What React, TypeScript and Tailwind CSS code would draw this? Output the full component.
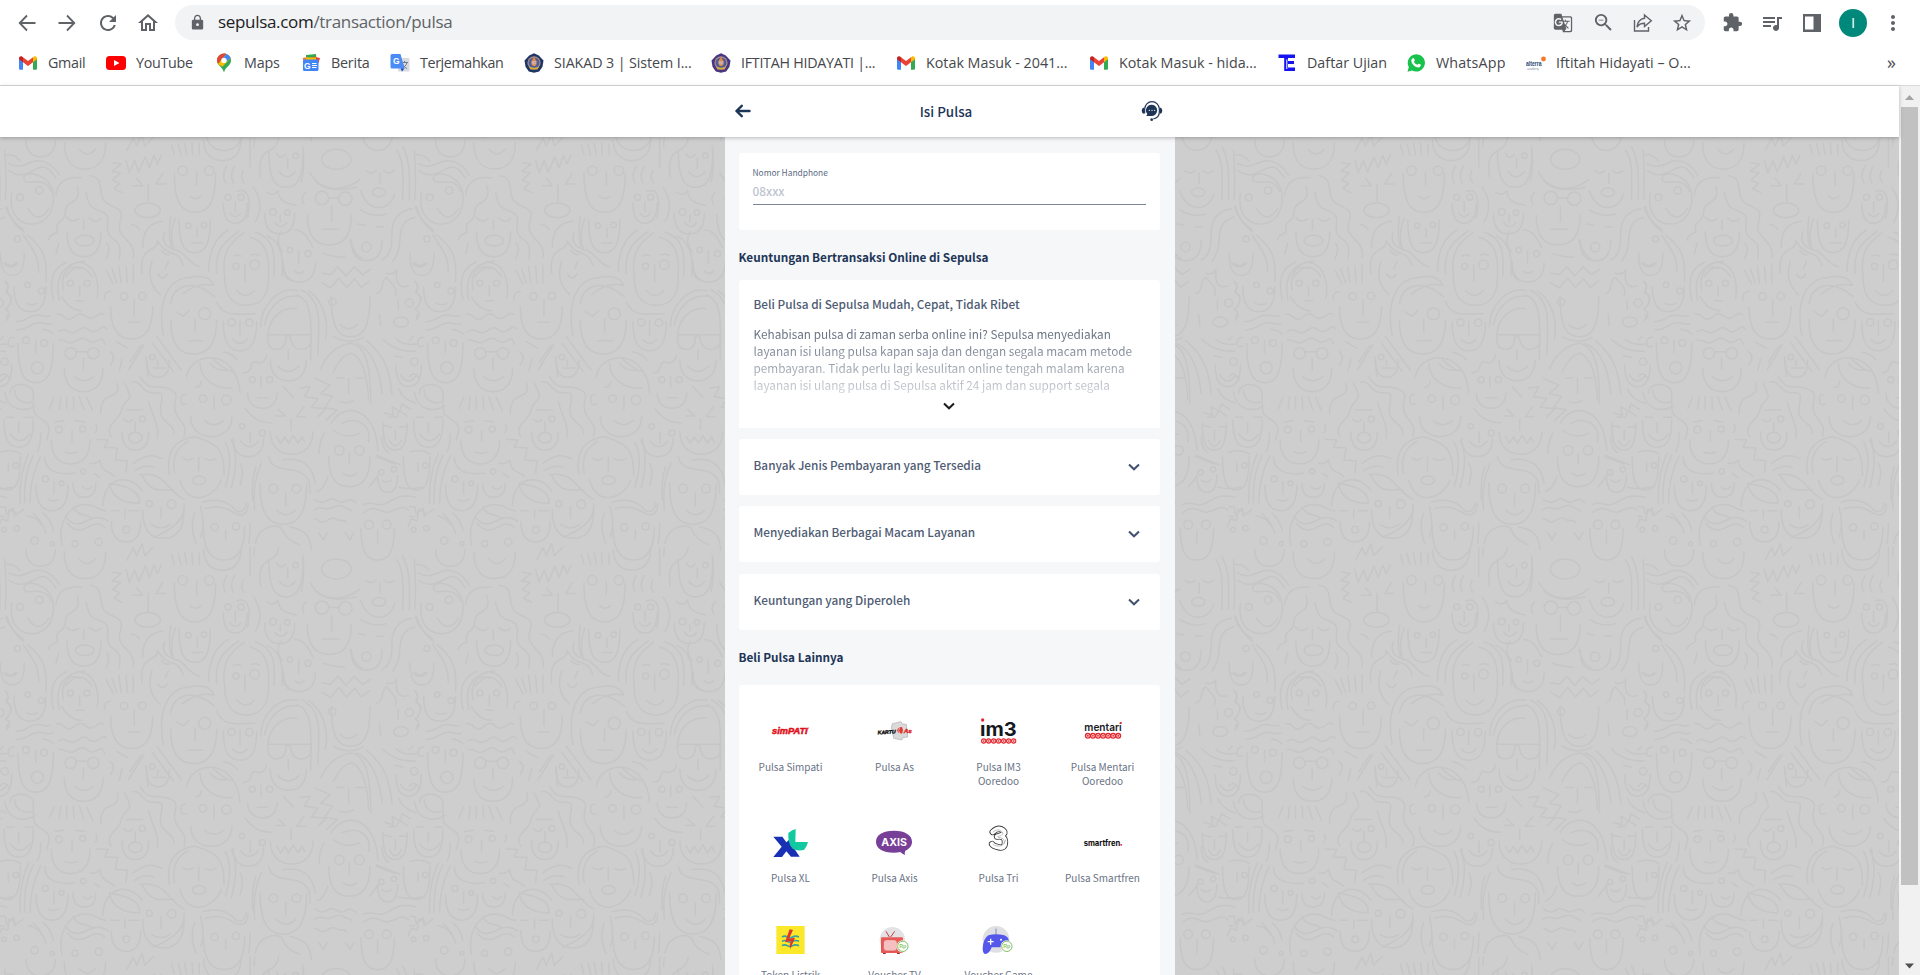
import React from "react";
import { MdExtension, MdGTranslate, MdLock, MdMoreVert, MdQueueMusic, MdZoomOut, MdStarBorder, MdRefresh, MdOutlineHome } from "react-icons/md";

/* ---------- doodle backdrop ---------- */

const TILE = 1228.8;

// Each face: chin outline, given as centre, half width, top and bottom.
const jaws: [number, number, number, number][] = [
  [122, 44, 30, 80], [255, 62, 38, 117], [667, 56, 30, 92], [858, 52, 60, 172], [585, 62, 130, 247],
  [706, 36, 220, 280], [839, 45, 250, 312], [584, 47, 270, 368], [252, 51, 305, 380], [988, 66, 255, 345],
  [740, 66, 440, 526], [395, 63, 530, 627], [581, 69, 570, 672], [720, 50, 575, 662], [865, 54, 690, 752],
  [90, 48, 470, 545], [107, 53, 640, 758], [251, 58, 715, 785], [634, 62, 860, 920], [56, 44, 870, 952],
  [212, 58, 930, 1002], [406, 40, 905, 960], [745, 46, 925, 980], [156, 48, 1065, 1142], [850, 70, 1060, 1183],
  [875, 64, 905, 973], [378, 44, 1175, 1235], [253, 34, 1060, 1102], [898, 48, 400, 456], [37, 36, 370, 436],
  [1100, 46, 330, 392], [1185, 36, 880, 960], [1048, 62, 980, 1070], [1163, 30, 1035, 1087], [787, 44, 790, 835],
  [474, 34, 690, 742], [490, 62, 1140, 1225], [672, 62, 1190, 1290], [1133, 50, 1195, 1290], [1226, 38, 705, 770],
  [1052, 58, 500, 620], [1250, 40, 980, 1080],
];

const eyes: [number, number, number][] = [
  [887, 77, 8], [548, 122, 14], [628, 122, 14], [684, 202, 9], [723, 202, 9], [819, 246, 10], [862, 248, 8],
  [60, 202, 10], [118, 181, 11], [565, 287, 8], [612, 285, 8], [966, 204, 20], [1036, 206, 20], [52, 327, 9],
  [708, 409, 9], [764, 404, 14], [870, 360, 8], [924, 371, 9], [83, 465, 8], [124, 483, 9], [211, 460, 9],
  [261, 460, 9], [372, 499, 11], [427, 498, 11], [614, 551, 18], [695, 577, 11], [748, 578, 11], [997, 516, 11],
  [78, 631, 10], [132, 639, 10], [212, 670, 17], [280, 670, 17], [457, 681, 8], [609, 806, 11], [679, 810, 14],
  [757, 749, 9], [809, 749, 9], [177, 899, 10], [248, 897, 9], [427, 867, 9], [726, 889, 8], [787, 909, 9],
  [1018, 961, 14], [1078, 961, 14], [250, 1024, 8], [136, 1047, 9], [185, 1060, 7], [448, 1121, 9], [515, 1123, 13],
  [820, 1076, 13], [889, 1076, 13], [379, 1199, 10], [644, 1192, 11], [708, 1189, 11], [12, 1199, 7], [50, 1195, 8],
  [104, 1232, 11], [157, 1241, 6], [225, 1241, 9], [296, 1236, 11], [112, 713, 18], [1099, 351, 14],
  [1228, 519, 12], [14, 695, 11], [1107, 1184, 13], [1160, 1184, 13], [47, 1006, 8], [1144, 1027, 8], [1182, 1018, 8],
];

// Noses: short vertical strokes.
const noses: [number, number, number][] = [
  [863, 85, 115], [590, 126, 165], [445, 162, 215], [706, 215, 245], [841, 255, 275], [592, 295, 322], [251, 270, 300],
  [995, 228, 276], [735, 404, 455], [896, 362, 400], [239, 468, 498], [403, 510, 558], [585, 567, 605], [720, 572, 615],
  [865, 660, 690], [107, 632, 668], [250, 685, 720], [473, 690, 708], [643, 798, 838], [783, 738, 770], [1046, 745, 790],
  [56, 878, 908], [216, 902, 935], [406, 876, 905], [751, 905, 938], [873, 868, 900], [1048, 970, 1003], [596, 982, 1022],
  [162, 1055, 1092], [857, 1090, 1128], [375, 1140, 1165], [483, 1130, 1165], [677, 1200, 1228], [1195, 510, 540],
  [1140, 130, 160], [1133, 1200, 1240], [1186, 900, 930], [25, 1000, 1025],
];

// Mouths: centre, half width, baseline, depth.
const mouths: [number, number, number, number][] = [
  [262, 24, 58, 14], [862, 24, 125, 15], [586, 16, 198, 8], [706, 16, 250, 10], [843, 18, 278, 12], [592, 16, 339, 0],
  [32, 16, 398, 9], [992, 26, 298, 0], [737, 26, 482, 14], [898, 14, 424, 6], [96, 16, 520, 4], [402, 18, 577, 0],
  [586, 22, 632, 0], [720, 22, 628, 12], [865, 32, 708, 16], [252, 30, 740, 12], [478, 18, 714, 0], [642, 28, 872, 12],
  [788, 16, 803, 0], [60, 30, 912, 20], [214, 18, 966, 4], [748, 26, 934, 16], [1050, 20, 1030, 8], [161, 16, 1108, 5],
  [858, 28, 1140, 14], [262, 14, 1070, 8], [482, 28, 1184, 10], [1046, 26, 584, 12], [115, 32, 235, 26], [240, 12, 512, 0],
  [1186, 18, 930, 18], [1226, 24, 735, 18], [1160, 14, 1050, 6], [1260, 22, 400, 10], [488, 14, 432, 12], [1230, 34, 1072, 4],
];

const ovals: [number, number, number, number][] = [
  [1009, 88, 44, 30], [443, 241, 38, 22], [254, 332, 28, 16], [1203, 576, 22, 15], [406, 923, 20, 16], [597, 1051, 20, 13],
  [1137, 187, 20, 13],
];

const strands = [
  "M20 75q22-4 40 18M25 100c30 16 46 6 70-4s58-2 84 40M27 122c30 22 56 10 84-6s42 8 56 28M14 60q6 80 2 148",
  "M35 190c-10 70 30 90 56 92s60-12 68-60-16-78-50-88-44 10-34 20 58-18 78 30M20 230q14 48 52 76",
  "M168 195c4-40 30-56 76-52M270 137c50 6 18 62 50 82s54 14 40 60 50 50 40 104M258 188c12 62 32 44 56 62s-8 52 22 74 24 30 22 62",
  "M232 168c16 60-38 40-36 78-2 40-32 16-24 60-22 12-22 10-26 24M320 340q14 16-2 46M176 340l-8 32M200 262q16 20 36 4M268 264q18 18 34 2",
  "M378 90l10 38 16-36 12 34 20-46 12 34 14-38 10 26 12-26M380 62l20-38 10 24 16-36 8 36 26-26M338 98l26 4-28 22 26 4-24 22 22 10-18 16 24 12",
  "M410 145l18 22h-30M488 130l-20 32h28M515 45l8 28M535 42l8 34M554 40l6 34M576 40l2 34M598 42v32",
  "M750 24v86M764 24l-2 26M782 140c-10-64 14-72 32-82s20-24 22-34M908 48q8 60-4 108M830 70q10 22 26 4",
  "M680 108q-16 26-4 50M704 108q-16 26-4 50M730 122q-12 20 2 36M712 184c34-14 42 26 30 80M760 172q36 50 6 104",
  "M930 128c30 58 100 60 150 20M946 154c40 40 104 20 124 18M800 186q20 16 34-4c2 38 40 40 54 44M918 186q-18 16-6 36",
  "M526 265q-20 50-4 96M512 258q-8 60 2 90M394 284q14 0 24 14M428 352c0-60 30-74 60-78M494 306c-16 40 20 50 40 56s36 44 66 48",
  "M426 430c-10-90 50-60 46-98 36 60 56 16 78 74M456 394q-20 60 24 100M505 394l-10 22M484 362q10 14 24 12",
  "M626 424c0-80 34-110 58-124M650 430c-8-80 36-102 66-126M674 440c-10-70 14-102 58-132M750 322c40 10 60 40 56 118M766 306c56 20 60 60 56 132M802 318c48 20 48 80 44 120",
  "M700 378q12-6 22 0M754 374q14-4 24 2M884 300c30 0 44 30 54 52M842 305q-18 30 6 60M850 396q-4 50 26 56M970 370q30 12 64 12",
  "M160 510c-20-90 22-104 40-114M178 510c-18-80 24-112 76-116M190 480c-10-50 16-80 50-64M230 396c50 0 70 50 62 108M196 440q44-56 80 0M185 500q24 42 60 42",
  "M318 420l22 42M336 416l14 42M357 408l6 50M378 408l4 50M400 406v54M332 484q-22 2-18 26M82 315c50 40 60 70 56 140M70 315c40 60 46 70 46 112",
  "M490 615c-20-110 20-170 76-172M512 520c8-50 60-80 132-20M548 492q46-36 92-26M558 444q70-16 84 22M528 545l22 14 18-18M650 515c20 50 70 36 114 36",
  "M782 590c0-60 50-120 110-108M794 585c10-54 50-92 100-86M804 612c6-60 54-82 86-76M892 495c50 20 40 90 40 196M904 480c70 30 50 120 50 194M926 482c50 36 60 100 50 146",
  "M804 614h128v24q-4 20-30 20t-32-40h-12q0 40-28 40-26 0-26-28zM966 430l26 4 22-24 24 28 24-28 26 24 24-16M966 458l26 16 24-30 24 28 24-26 20 26 24-18",
  "M18 455q12 14 0 30 20 12 14 30t-16 22q24 16 2 34M48 575c40-2 36-20 62-20s20 8 40 2M50 600c40-2 40-22 66-22s20 10 40 2M128 598q18 2 32 14",
  "M170 552c26-2 20 18 38 16s18-20 36-16 16 18 34 12 20-20 34-10M176 604c24-14 24 8 44 4s24-22 38-14 18 16 34 8 14-18 28-6M176 630c24-2 20 10 38 8s24-20 40-12 18 16 34 8 18-14 26 8",
  "M42 622q-20 0-16 22 2 10 16 4M230 665h32M330 665q20 14 2 40M350 635l34 20M366 688l-8 34M432 644l-46 76M424 646l-34 50M470 620l74 100M458 640l62 84M438 680l6 60",
  "M560 740c14-80 150-86 160 48M600 700c0 50 50 78 96 74M630 700q18 24 50 20M640 688q46 40 56 34M670 666q30 6 42 24M730 728c34 2 14-44 44-30 10 4 24-6 26-22",
  "M352 760c10 44-30 32-42 54s-6 26-8 38M374 760c20 40 20 40 2 58s-6 28-24 46-34 36-18 56M396 756c30-6 28 32 60 32s34-4 26 44 42 44 40 80M420 740c30 50 50 20 90 38s-2 40 20 76 30 30 22 66M446 815c16 60 30 60 26 110",
  "M380 840h48M372 868q14 14 26 0M556 794q-16-2-12 22 2 12 16 6M586 772q16 0 18-18M900 774l30-4-16 30 40 6-20 26 44 4-24 24M944 745l46 20-28 26 36 8-24 34 38 6-34 32M834 838l22 20h-28M912 830l-22 30h26M850 770l30 32",
  "M962 716c20-44 50-70 90-76 40 6 60 50 60 180M1000 726c20-40 40-56 56-56 30 14 46 60 50 140M1070 640c50 20 70 90 76 150M1100 632c60 50 70 100 76 160M1010 744h22M1068 744h24M1020 815q20 8 40-4",
  "M14 786c10 60 60 60 92 42M30 790c0-40 70-30 70 0 0 60-4 60 28 80s16 40 12 60M44 780c0 40 40 40 50 36M148 836l14-34M178 838l4-38M200 836v-36M222 836l-2-36M252 840l-14-40M278 842l-18-40",
  "M20 862h22M76 862h24M166 876l26-4M226 872l28 4M290 928l34 2-10 22 38 2-6 36 36 2-4 36M134 982c0 40 40 54 90 48M122 910q0 40-10 54M288 884q6 20-4 24",
  "M508 1034c-14-90 40-110 76-114 70 20 90 40 88 116M524 1030c-10-50 10-80 40-96M550 984q14 12 30 0M614 986q16 10 34 0M676 936q26 50 0 134M694 930q26 50 0 144M540 1050c20 80 100 60 124 0M720 1000q14 20 0 66",
  "M60 1120q-4-84 26-150M74 1118q-4-84 26-142M90 1118q0-74 32-140M400 1000c40-30 60-26 86-14M404 1022q30-20 58-10M270 1000q18 4 30-10c6 44 30 30 44 50M282 1030l16 12",
  "M308 1128c4-90 80-100 118-46M328 1060c10 50 50 60 90 60 4-34-30-50-90-60zM426 1036c30 60 60 40 96 44M420 1034c80-10 80 50 132 74M334 1142h22M388 1142h28M552 1122q8 60-92 100",
  "M806 980c10 50 70 30 100 50s22 40 24 60M848 990c60-10 90 20 98 70M784 1000c-20 44-24 80-20 140M768 1010q-14 40-10 100M984 1040q-14 40-34 44M972 910q-16 30-14 60M736 836q30 44 80 42",
  "M830 920l12 20 12-20 12 20 14-24 14 24 12-20 8 16M944 1108c24 16 30 8 44 0s26 14 42 8 20-14 38 2M942 1140c20-16 30 0 46-4s28-16 42-6 20 4 26 14M944 1166c16 0 10 14 26 10s24-18 40-8 20-4 30 10M956 1208l14 22 12-22M1036 1208l14 22 12-22",
  "M186 1245c-16-80 34-130 84-120 24 6 20 12 48 18M196 1160c24 34 50 20 70 10s40-10 58 4M202 1180c30 36 56 14 74 6s30-2 38 6M220 1130c10 30 40 20 54 34M608 1116c50-14 80 4 94 20s34 10 36-16M616 1136c50-16 80 10 94 16s34 4 34-30",
  "M584 1150q-16 40 4 90M602 1130q14 60 0 90M750 1180q0 40-4 60M766 1240c10-60 80-60 80-40M870 1190c40 10 60 20 64 70M848 1200q10 30 50 44M100 1150q30 30 38 60M130 1150q24 20 30 52M84 1158q30 6 40 26",
  "M0 1130l16 0 4 24 20-20 4 24 26-20M0 1158l14 2M22 555v10M10 620l-10 10M0 740q14-20 30 8M0 966q36-10 62 6M1050 330q10 40 36 56M1000 620q46 26 90 2",
  "M1098 122q14 14 30 0M1152 122q14 14 30 0M1082 182c20 66 86 66 102 10M1082 240q40 24 78 12M1190 60c20 30 20 60 18 150M1208 50c22 40 22 90 20 160M1074 282l20 4M1128 290h22",
  "M1236 236c-44 6-60 40-60 70s0 70-30 84M1244 262c-40 10-42 40-44 62s0 40-22 70M1246 230q10 40 52 68M1160 430q20 6 30-10-6 60 34 48M1130 490c24-4 10-40 30-48 14 20 36 30 26 54M1244 454q16 14 4 34 20 10 12 26M1138 552l4 36",
  "M1148 628c30 30 60 36 98 36M1190 628q20 20 60 14M1184 678l24 4M1196 776q10 30 52 44M1154 848l26 8-4-26 24 14 6-22 26 16M1166 862l24-2 8-18 24 16M1150 886l24 6M1198 890h24M1146 922q0 34 20 46M1130 976l70 28M1132 1040l-24 30",
  "M994 880c30-60 130-60 140 80M1026 880c40-20 90 0 80 56M1000 900q40 30 78 10M1128 980l58 22M1090 1124c30-14 40 10 68-4s40-30 90-18M1090 1148c40-30 50 4 76-2s40-24 60-6M1224 1190l10-24 18 6 4-34 20 10",
];

function Tile() {
  return (
    <g id="faces" fill="none" stroke="#c6c6c6" strokeWidth="4.5" strokeLinecap="round" strokeLinejoin="round">
      {jaws.map(([cx, hw, top, bottom], i) => (
        <path key={`j${i}`} d={`M${cx - hw} ${top}C${cx - hw} ${bottom - hw * 0.4} ${cx - hw * 0.6} ${bottom} ${cx} ${bottom}S${cx + hw} ${bottom - hw * 0.4} ${cx + hw} ${top}`} />
      ))}
      {eyes.map(([x, y, r], i) => <circle key={`e${i}`} cx={x} cy={y} r={r} />)}
      {noses.map(([x, a, b], i) => <path key={`n${i}`} d={`M${x} ${a}V${b}`} />)}
      {mouths.map(([x, w, y, d], i) => <path key={`m${i}`} d={`M${x - w} ${y}Q${x} ${y + 2 * d} ${x + w} ${y}`} />)}
      {ovals.map(([x, y, a, b], i) => <ellipse key={`o${i}`} cx={x} cy={y} rx={a} ry={b} />)}
      {strands.map((d, i) => <path key={`s${i}`} d={d} />)}
      <path d="M986 204h30" />
    </g>
  );
}

function Backdrop() {
  const spots: [number, number][] = [];
  for (let i = -1; i < 5; i++) for (let j = -1; j < 3; j++) if (i || j) spots.push([i * TILE, j * TILE]);
  return (
    <svg className="absolute inset-0 h-full w-full" viewBox="0 21 5697 2514" preserveAspectRatio="xMinYMin slice" aria-hidden="true">
      <Tile />
      {spots.map(([x, y], i) => <use key={i} href="#faces" x={x} y={y} />)}
    </svg>
  );
}

/* ---------- bookmark icons ---------- */

const Gmail = () => (
  <svg viewBox="0 0 20 20" className="size-5">
    <path d="M1 5v10.5a1.2 1.2 0 0 0 1.2 1.2H5V8.5z" fill="#4285f4" />
    <path d="M19 5v10.5a1.2 1.2 0 0 1-1.2 1.2H15V8.5z" fill="#34a853" />
    <path d="M1 5.2C1 3.300 3 2.700 4.300 3.700L5 4.300v4.900L1 6.300z" fill="#c5221f" />
    <path d="M19 5.200c0-1.900-2-2.500-3.300-1.500l-.7.6v4.900l4-2.900z" fill="#fbbc04" />
    <path d="M5 4.300l5 3.800 5-3.800v4.900L10 13 5 9.200z" fill="#ea4335" />
  </svg>
);
const YouTube = () => (
  <svg viewBox="0 0 20 20" className="size-5">
    <rect x="0" y="3" width="20" height="14" rx="3.500" fill="#f00" />
    <path d="M8 7l5.500 3L8 13z" fill="#fff" />
  </svg>
);
const Maps = () => (
  <svg viewBox="0 0 20 20" className="size-5">
    <path d="M3 7.500a7 7 0 0 1 14 0c0 5-5.500 6-7 12-1.500-6-7-7-7-12z" fill="#34a853" />
    <path d="M4 11C2 7 3.500 4.500 4.700 3.100L8 5.800z" fill="#ea4335" />
    <path d="M4.700 3.100C7 .4 10.500 0 12.300.9L8 6z" fill="#ea4335" />
    <path d="M12.300.9C14.500 1.600 16 3.200 16.600 5l-8 8.500C6.500 12.800 4.800 12 4 11z" fill="#fbbc04" />
    <path d="M12.300.9c2 .7 3.500 2.100 4.300 4.100L12 9 8.500 5.500z" fill="#4285f4" />
    <circle cx="10" cy="7.400" r="2.700" fill="#fff" />
  </svg>
);
const News = () => (
  <svg viewBox="0 0 20 20" className="size-5">
    <path d="M5 2l10-1 .5 6H5z" fill="#34a853" />
    <path d="M1.500 5l6-1L9 9H3z" fill="#ea7a3b" />
    <path d="M12 3.500l7 1.500-1.500 5-7-1z" fill="#ea4335" />
    <path d="M5 4.500h10V9H5z" fill="#fbbc04" />
    <rect x="2" y="6.500" width="15.500" height="11.500" rx="1.300" fill="#4285f4" />
    <text x="3" y="15.500" fontSize="8.500" fontWeight="700" fill="#fff" fontFamily="Liberation Sans, sans-serif">G</text>
    <path d="M11 10.500h4.500M11 12.500h5M11 14.500h4.500" stroke="#fff" strokeWidth="1" />
  </svg>
);
const Translate = () => (
  <svg viewBox="0 0 20 20" className="size-5">
    <rect x="8" y="5" width="11.500" height="13.500" rx="1" fill="#d9dadd" />
    <path d="M11 9.500h7M14.500 8v1.500M17 9.500c-.8 3-3 5-5 6M12.500 11c1 2 2.500 3.500 4.500 4.500" stroke="#6b7a8c" strokeWidth="1" fill="none" />
    <path d="M2 1h8.500l4 14.500H2A1.500 1.500 0 0 1 .5 14V2.500A1.500 1.500 0 0 1 2 1z" fill="#4b8bf5" />
    <path d="M10.500 15.500h4l-2.500 3z" fill="#1a4fc0" />
    <text x="3" y="11" fontSize="8.500" fontWeight="700" fill="#fff" fontFamily="Liberation Sans, sans-serif">G</text>
  </svg>
);
const Campus = ({ ring }: { ring: string }) => (
  <svg viewBox="0 0 20 20" className="size-5">
    <path d="M10 .3l4.800 2.200 4.700 5-1 6.300-3.300 4.700-5.200 1.200-5.200-1.200L1.500 13.800l-1-6.300 4.700-5z" fill={ring} />
    <circle cx="10" cy="9.800" r="6.600" fill="#a98f8c" />
    <circle cx="10" cy="9.800" r="5.400" fill="#4f5f96" />
    <path d="M10 3.500l2.300 4.500-.8 5H8.500l-.8-5z" fill="#e58a3c" />
    <path d="M7.500 8h5v3.500h-5z" fill="#d8a99a" />
    <path d="M5 13.500q5 2.500 10 0l-1.500 3h-7z" fill="#d9b13b" />
  </svg>
);
const Exam = () => (
  <svg viewBox="0 0 20 20" className="size-5">
    <path d="M1.500 1.500h16.500v3.500H11v3h6v3h-6v3.500h7V18H7.200V5H1.500z" fill="#1414f0" />
    <path d="M9.800 6.500V16" stroke="#fff" strokeWidth="1" />
  </svg>
);
const WhatsApp = () => (
  <svg viewBox="0 0 20 20" className="size-5">
    <path d="M1.500 18.800l1.300-4.700a8.600 8.600 0 1 1 3.300 3.300z" fill="#19c24c" />
    <path d="M6.800 5.300c.5-.3 1.100-.2 1.300.3l.7 1.700c.1.400-.7 1.100-.8 1.400.7 1.500 1.900 2.500 3.400 3.100.4-.2 1-1.300 1.500-1.100l1.800.9c.7.700-.4 2.700-2 2.800-4 .1-7.600-4.300-7.400-6.900.1-1 .8-1.800 1.500-2.200z" fill="#fff" />
  </svg>
);
const Alterra = () => (
  <svg viewBox="0 0 20 20" className="size-5">
    <text x="0" y="12.500" fontSize="6.500" fontWeight="700" textLength="15.500" lengthAdjust="spacingAndGlyphs" fill="#27466f" fontFamily="Liberation Sans, sans-serif">alterra</text>
    <text x="1" y="17" fontSize="4" textLength="12" fill="#9fb0c4" fontFamily="Liberation Sans, sans-serif">academy</text>
    <circle cx="17.500" cy="6" r="2.400" fill="#f47a2b" />
  </svg>
);

const bookmarks: [string, string, React.ReactNode][] = [
  ["Gmail", "w-[88px] tracking-[-0.3px]", <Gmail />],
  ["YouTube", "w-[108px] tracking-[-0.3px]", <YouTube />],
  ["Maps", "w-[87px] tracking-[-0.2px]", <Maps />],
  ["Berita", "w-[89px] tracking-[-0.2px]", <News />],
  ["Terjemahkan", "w-[134px] tracking-[-0.38px]", <Translate />],
  ["SIAKAD 3 | Sistem I...", "w-[187px] tracking-[-0.1px]", <Campus ring="#1f3566" />],
  ["IFTITAH HIDAYATI |...", "w-[185px] tracking-[-0.28px]", <Campus ring="#4a3580" />],
  ["Kotak Masuk - 2041...", "w-[193px]", <Gmail />],
  ["Kotak Masuk - hida...", "w-[188px]", <Gmail />],
  ["Daftar Ujian", "w-[129px]", <Exam />],
  ["WhatsApp", "w-[120px] tracking-[0.15px]", <WhatsApp />],
  ["Iftitah Hidayati – O...", "w-[180px]", <Alterra />],
];

function Browser() {
  return (
    <div className="shrink-0 border-b border-[#d8dadd] bg-white font-['Open_Sans',sans-serif] text-[#5f6368]">
      <div className="flex h-[45px] items-center pl-[17px]">
        <svg viewBox="0 0 20 20" className="size-5 shrink-0" fill="none" stroke="currentColor" strokeWidth="1.800">
          <path d="M18.500 10H3M10 2.500L2.700 10l7.300 7.500" />
        </svg>
        <svg viewBox="0 0 20 20" className="ml-5 size-5 shrink-0" fill="none" stroke="currentColor" strokeWidth="1.800">
          <path d="M1.500 10H17M10 2.500l7.300 7.500-7.300 7.500" />
        </svg>
        <MdRefresh className="ml-[19px] size-6 shrink-0" />
        <MdOutlineHome className="ml-4 size-6 shrink-0" />
        <div className="ml-[15px] flex h-[35px] w-[1530px] shrink-0 items-center rounded-full bg-[#f1f3f4] pl-[14px]">
          <MdLock className="mr-3 size-[17px]" />
          <span className="grow pb-px text-[17px] tracking-[-0.32px]">
            <span className="text-[#202124]">sepulsa.com</span>/transaction/pulsa
          </span>
          <MdGTranslate className="size-5" />
          <MdZoomOut className="ml-[19px] size-[23px]" />
          <svg viewBox="0 0 20 20" className="ml-[18px] size-5" fill="none" stroke="currentColor" strokeWidth="1.400">
            <path d="M1.500 7v11h14v-4M11.500 2l6.800 5.800-6.800 5.700v-3.300c-3.500 0-5.700 1-7.500 3.800.5-4.800 3-8 7.500-8.700z" />
          </svg>
          <MdStarBorder className="mr-3 ml-[18px] size-[22px]" />
        </div>
        <MdExtension className="ml-[17px] size-[21px] shrink-0" />
        <MdQueueMusic className="ml-[17px] size-6 shrink-0" />
        <svg viewBox="0 0 18 18" className="ml-[19px] size-[18px] shrink-0">
          <path d="M0 0h18v18H0z" fill="currentColor" />
          <path d="M2 2.500h8.500v13H2z" fill="#fff" />
        </svg>
        <span className="ml-[18px] flex size-7 shrink-0 items-center justify-center rounded-full bg-[#00897b] text-[15px] leading-none text-white">I</span>
        <MdMoreVert className="ml-[14px] size-6 shrink-0" />
      </div>
      <div className="flex h-10 items-center pb-1 pl-[18px] text-[14.300px] text-[#45484c]">
        {bookmarks.map(([label, box, icon]) => (
          <div key={label} className={`flex shrink-0 items-center gap-2.5 whitespace-nowrap ${box}`}>
            {icon}
            <span>{label}</span>
          </div>
        ))}
        <span className="mt-[-3px] ml-auto pr-6 text-[18px] leading-none text-[#4a4d51]">»</span>
      </div>
    </div>
  );
}

/* ---------- operator logos ---------- */

const sans = "Liberation Sans, sans-serif";
const Art = ({ children }: { children: React.ReactNode }) => (
  <svg viewBox="0 0 120 120" className="size-10 overflow-visible">{children}</svg>
);
const Ooredoo = ({ x, y, r, gap }: { x: number; y: number; r: number; gap: number }) => (
  <g>
    {[0, 1, 2, 3, 4, 5, 6].map((i) => <circle key={i} cx={x + i * gap} cy={y} r={r} fill="#e3262e" />)}
    {[0, 1, 2, 3, 4, 5, 6].map((i) => <circle key={`w${i}`} cx={x + i * gap} cy={y} r={r * 0.45} fill="none" stroke="#fff" strokeWidth="2.200" />)}
  </g>
);
const RpBadge = () => (
  <g>
    <circle cx="83.500" cy="82" r="18.500" fill="#fff" />
    <circle cx="83.500" cy="82" r="15.500" fill="#fff" stroke="#7fbf5a" strokeWidth="3" />
    <text x="83.500" y="87.500" fontSize="16" fontWeight="700" textAnchor="middle" fill="#8cc76a" fontFamily={sans}>Rp</text>
  </g>
);

const products: [string, React.ReactNode][] = [
  ["Pulsa Simpati", (
    <Art>
      <text x="3" y="68" fontSize="27" fontWeight="700" fontStyle="italic" textLength="107" lengthAdjust="spacingAndGlyphs" fill="#e0101b" stroke="#e0101b" strokeWidth="1.500" fontFamily={sans}>simPATI</text>
      <circle cx="112" cy="51" r="1.500" fill="#e0101b" />
    </Art>
  )],
  ["Pulsa As", (
    <Art>
      <path d="M52 38l26-6 4 7 12 1 4 38-14 2-4 7-24-5-2-10-5-20z" fill="#dadada" stroke="#9a9a9a" strokeWidth="1.500" />
      <path d="M66 58q3-9 15-10l3 10-3 10q-12 0-15-10z" fill="#e23a34" />
      <path d="M74 51l-3 7 3 8" stroke="#fff" strokeWidth="1.500" fill="none" />
      <text x="8" y="70" fontSize="15" fontWeight="700" fontStyle="italic" textLength="54" lengthAdjust="spacingAndGlyphs" transform="rotate(-3 8 70)" fill="#111" stroke="#111" strokeWidth="1.200" fontFamily={sans}>KARTU</text>
      <text x="86" y="65" fontSize="18" fontWeight="700" fontStyle="italic" textLength="25" lengthAdjust="spacingAndGlyphs" fill="#dd1f1f" stroke="#dd1f1f" fontFamily={sans}>As</text>
    </Art>
  )],
  ["Pulsa IM3 Ooredoo", (
    <Art>
      <text x="3" y="75" fontSize="57" fontWeight="700" textLength="110" lengthAdjust="spacingAndGlyphs" fill="#15181d" fontFamily="Inter, sans-serif">ım3</text>
      <circle cx="11" cy="27" r="5" fill="#e3262e" />
      <Ooredoo x={14} y={90} r={8} gap={15} />
    </Art>
  )],
  ["Pulsa Mentari Ooredoo", (
    <Art>
      <text x="4" y="59" fontSize="33" fontWeight="600" textLength="112" lengthAdjust="spacingAndGlyphs" fill="#15181d" fontFamily="Inter, sans-serif">mentari</text>
      <circle cx="113.500" cy="36" r="3.200" fill="#e3262e" />
      <Ooredoo x={14.5} y={74.5} r={9} gap={15.2} />
    </Art>
  )],
  ["Pulsa XL", (
    <Art>
      <path d="M7 44h27l12 17 14-12q0 22 12 34l14 21H60L46 88 33 105H7l25-31z" fill="#1730b4" />
      <path d="M52 33q10-9 22-12l-1 39h38q-3 14-12 24-20 4-34-4-15-14-13-47z" fill="#10c9a0" />
    </Art>
  )],
  ["Pulsa Axis", (
    <Art>
      <path d="M57 26c34 0 54 14 54 33 0 12-7 21-20 27q-3 6-1 13-8-3-14-9-9 2-19 2C23 92 3 79 3 59s20-33 54-33z" fill="#773f98" />
      <text x="19" y="73" fontSize="30" fontWeight="700" textLength="77" lengthAdjust="spacingAndGlyphs" fill="#fff" fontFamily="Inter, sans-serif">AXIS</text>
    </Art>
  )],
  ["Pulsa Tri", (
    <Art>
      <g fill="none" strokeLinecap="round" strokeLinejoin="round">
        <path d="M41 30Q58 14 72 25T54 44Q78 40 78 60T60 76 39 66" stroke="#3c3c3c" strokeWidth="19" />
        <path d="M41 30Q58 14 72 25T54 44Q78 40 78 60T60 76 39 66" stroke="#fff" strokeWidth="14" />
        <path d="M42 30q14-12 26-2t-12 16M58 46q20 2 18 14t-18 12-16-6M80 54l-4 10" stroke="#8a8a8a" strokeWidth="1.500" />
      </g>
    </Art>
  )],
  ["Pulsa Smartfren", (
    <Art>
      <text x="2" y="71" fontSize="24" fontWeight="700" textLength="110" lengthAdjust="spacingAndGlyphs" fill="#0c0c0c" fontFamily="Inter, sans-serif">smartfren</text>
      <circle cx="114.500" cy="68.500" r="2.800" fill="#e8174b" />
    </Art>
  )],
  ["Token Listrik", (
    <Art>
      <path d="M16 21h85v84H16z" fill="#fbe82b" />
      <path d="M33 54q8-5 16 0t16 0 19 0M33 67q8-5 16 0t16 0 19 0M33 80q8-5 16 0t16 0 19 0" fill="none" stroke="#35a3a0" strokeWidth="5" />
      <path d="M56 31l10 2-12 26 18-3-14 34-2-12 4-12-18 4z" fill="#e3342b" />
    </Art>
  )],
  ["Voucher TV", (
    <Art>
      <circle cx="52" cy="62" r="38" fill="#e3e3e6" />
      <path d="M33 37l10 17M59 37L47 54" stroke="#c23b40" strokeWidth="3" />
      <rect x="18" y="55" width="66" height="47" rx="3" fill="#ea5a55" />
      <path d="M24 102h8v3h-8zM66 102h8v3h-8z" fill="#8e2b35" />
      <rect x="25" y="62" width="42" height="34" rx="10" fill="#f7c0c0" stroke="#d24a4a" strokeWidth="2" />
      <RpBadge />
    </Art>
  )],
  ["Voucher Game", (
    <Art>
      <circle cx="51" cy="61" r="40" fill="#e0e0e4" />
      <path d="M51 29v22" stroke="#8084c8" strokeWidth="3" />
      <path d="M28 49q23-6 48 0 12 4 15 20v16H38q-6 18-18 20-9-1-9-16 1-30 17-40z" fill="#5457ea" />
      <path d="M35 59v18M26 68h18" stroke="#fff" strokeWidth="4" />
      <circle cx="66" cy="62" r="3" fill="#fff" />
      <RpBadge />
    </Art>
  )],
];

/* ---------- page ---------- */

const Chevron = ({ className }: { className: string }) => (
  <svg viewBox="0 0 12 8" className={`h-2 w-3 shrink-0 ${className}`} fill="none" stroke="currentColor" strokeWidth="2">
    <path d="M1 1.500l5 4.800 5-4.800" />
  </svg>
);

const Heading = ({ children, className }: { children: string; className: string }) => (
  <h2 className={`text-[11.750px] leading-[18px] font-bold text-[#1d3557] ${className}`}>{children}</h2>
);

const Fold = ({ children, className }: { children: string; className: string }) => (
  <div className={`flex h-14 items-center justify-between rounded-[3px] bg-white pr-5 pl-[15px] ${className}`}>
    <span className="pb-[5px] text-[11.800px] leading-[18px] font-medium text-[#4e5b73]">{children}</span>
    <Chevron className="text-[#42526e]" />
  </div>
);

export default function App() {
  return (
    <div className="flex h-[975px] w-[1920px] flex-col overflow-hidden bg-white">
      <Browser />
      <div className="flex min-h-0 grow font-['Noto_Sans_CJK_SC',sans-serif]">
        <div className="flex w-[1899px] flex-col">
          <header className="z-10 flex h-[51px] shrink-0 items-center justify-center bg-white shadow-[0_1px_4px_rgba(0,0,0,0.250)]">
            <div className="flex w-[450px] items-center justify-between pr-3 pb-px pl-[9px]">
              <svg viewBox="0 0 18 16" className="h-4 w-[18px]" fill="none" stroke="#1d3557" strokeWidth="2.400" strokeLinecap="round" strokeLinejoin="round">
                <path d="M15.500 8H3M7.800 2.800L2.400 8l5.400 5.200" />
              </svg>
              <h1 className="text-[13.400px] leading-5 font-medium text-[#1d3557]">Isi Pulsa</h1>
              <svg viewBox="0 0 66 66" className="size-[22px]">
                <path d="M11 40V27a22 22 0 0 1 44 0v9q0 17-18 21" fill="none" stroke="#1d3557" strokeWidth="3.500" />
                <path d="M10 22q-8 2-8 10t8 10zM56 22q8 2 8 10t-8 10z" fill="#1d3557" />
                <circle cx="32" cy="59" r="4" fill="#1d3557" />
                <path d="M33 14a17 17 0 1 1-3 34H16l3-6A17 17 0 0 1 33 14z" fill="#1d3557" />
                <circle cx="25" cy="31" r="2" fill="#fff" />
                <circle cx="33" cy="31" r="2" fill="#fff" />
                <circle cx="41" cy="31" r="2" fill="#fff" />
              </svg>
            </div>
          </header>
          <div className="relative flex min-h-0 grow justify-center overflow-hidden bg-[#cecece]">
            <Backdrop />
            <main className="relative flex w-[450px] flex-col bg-[#f5f7f9] pt-4 pr-[15px] pl-[14px]">
              <section className="h-[77px] shrink-0 rounded-[3px] bg-white px-[14px] pt-[13px]">
                <div className="text-[8.400px] leading-3 text-[#5d6b82]">Nomor Handphone</div>
                <div className="mt-[5px] border-b border-[#7d8797] pb-[5px] text-[11.800px] leading-4 font-medium text-[#bcc3d0]">08xxx</div>
              </section>
              <Heading className="mt-[18px]">Keuntungan Bertransaksi Online di Sepulsa</Heading>
              <section className="mt-[14px] h-[148px] shrink-0 rounded-t-[3px] bg-white px-[15px] pt-[15px]">
                <h3 className="text-[11.800px] leading-[18px] font-medium text-[#4e5b73]">Beli Pulsa di Sepulsa Mudah, Cepat, Tidak Ribet</h3>
                <p className="mt-3 text-[11.750px] leading-[17px] whitespace-nowrap text-[#5a6577] [mask-image:linear-gradient(to_bottom,#000_0%,rgba(0,0,0,0.300)_100%)]">
                  Kehabisan pulsa di zaman serba online ini? Sepulsa menyediakan<br />
                  layanan isi ulang pulsa kapan saja dan dengan segala macam metode<br />
                  pembayaran. Tidak perlu lagi kesulitan online tengah malam karena<br />
                  layanan isi ulang pulsa di Sepulsa aktif 24 jam dan support segala
                </p>
                <Chevron className="mx-auto mt-[9px] text-[#1b1b1b]" />
              </section>
              <div className="mt-[11px] flex flex-col">
                <Fold className="mb-[11px]">Banyak Jenis Pembayaran yang Tersedia</Fold>
                <Fold className="mb-3">Menyediakan Berbagai Macam Layanan</Fold>
                <Fold className="">Keuntungan yang Diperoleh</Fold>
              </div>
              <Heading className="mt-[18px]">Beli Pulsa Lainnya</Heading>
              <section className="mt-[19px] grid h-[400px] shrink-0 grid-cols-[104px_104px_104px_104px] content-start gap-y-[34px] rounded-[3px] bg-white pt-[26px]">
                {products.map(([name, art]) => (
                  <div key={name} className="flex flex-col items-center">
                    {art}
                    <span className="mt-[9px] max-w-[78px] text-center text-[10px] leading-[14px] text-[#6a7385]">{name}</span>
                  </div>
                ))}
              </section>
            </main>
          </div>
        </div>
        <div className="flex w-[21px] flex-col items-center bg-[#f1f1f1]">
          <svg viewBox="0 0 21 21" className="h-[21px] w-[21px] shrink-0"><path d="M6 14l4.500-5 4.500 5z" fill="#a3a3a3" /></svg>
          <div className="h-[778px] w-[17px] shrink-0 bg-[#c1c1c1]" />
          <svg viewBox="0 0 21 21" className="mt-auto h-[21px] w-[21px] shrink-0"><path d="M6 9.500h9l-4.500 5z" fill="#505050" /></svg>
        </div>
      </div>
    </div>
  );
}
